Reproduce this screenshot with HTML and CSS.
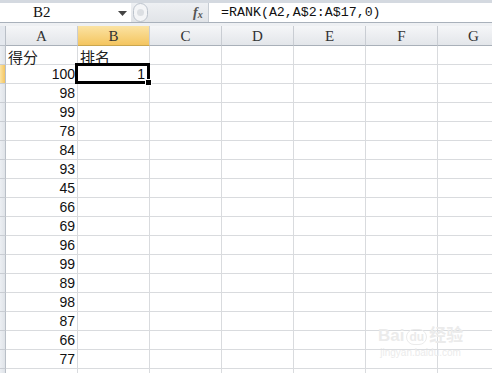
FILE: index.html
```html
<!DOCTYPE html>
<html>
<head>
<meta charset="utf-8">
<link rel="stylesheet" href="styles.css">
</head>
<body>
<div class="app">
  <div class="fbar">
    <div class="namebox">
      <span class="ref">B2</span>
      <svg class="drop" width="9" height="5" viewBox="0 0 9 5"><path d="M0 0H9L4.5 5Z" fill="#444"/></svg>
    </div>
    <div class="mid">
      <span class="knob"><span class="knob-in"></span></span>
      <span class="fx">f<sub>x</sub></span>
    </div>
    <div class="formula">=RANK(A2,A$2:A$17,0)</div>
  </div>
  <div class="gap"></div>
  <div class="sheet">
    <div class="corner"></div>
    <div class="ch">A</div>
    <div class="ch sel">B</div>
    <div class="ch">C</div>
    <div class="ch">D</div>
    <div class="ch">E</div>
    <div class="ch">F</div>
    <div class="ch">G</div>

    <div class="rh"></div><div class="c txt">得分</div><div class="c txt">排名</div><div class="c"></div><div class="c"></div><div class="c"></div><div class="c"></div><div class="c"></div>
    <div class="rh sel"></div><div class="c num">100</div><div class="c num active">1<span class="handle"></span></div><div class="c"></div><div class="c"></div><div class="c"></div><div class="c"></div><div class="c"></div>
    <div class="rh"></div><div class="c num">98</div><div class="c"></div><div class="c"></div><div class="c"></div><div class="c"></div><div class="c"></div><div class="c"></div>
    <div class="rh"></div><div class="c num">99</div><div class="c"></div><div class="c"></div><div class="c"></div><div class="c"></div><div class="c"></div><div class="c"></div>
    <div class="rh"></div><div class="c num">78</div><div class="c"></div><div class="c"></div><div class="c"></div><div class="c"></div><div class="c"></div><div class="c"></div>
    <div class="rh"></div><div class="c num">84</div><div class="c"></div><div class="c"></div><div class="c"></div><div class="c"></div><div class="c"></div><div class="c"></div>
    <div class="rh"></div><div class="c num">93</div><div class="c"></div><div class="c"></div><div class="c"></div><div class="c"></div><div class="c"></div><div class="c"></div>
    <div class="rh"></div><div class="c num">45</div><div class="c"></div><div class="c"></div><div class="c"></div><div class="c"></div><div class="c"></div><div class="c"></div>
    <div class="rh"></div><div class="c num">66</div><div class="c"></div><div class="c"></div><div class="c"></div><div class="c"></div><div class="c"></div><div class="c"></div>
    <div class="rh"></div><div class="c num">69</div><div class="c"></div><div class="c"></div><div class="c"></div><div class="c"></div><div class="c"></div><div class="c"></div>
    <div class="rh"></div><div class="c num">96</div><div class="c"></div><div class="c"></div><div class="c"></div><div class="c"></div><div class="c"></div><div class="c"></div>
    <div class="rh"></div><div class="c num">99</div><div class="c"></div><div class="c"></div><div class="c"></div><div class="c"></div><div class="c"></div><div class="c"></div>
    <div class="rh"></div><div class="c num">89</div><div class="c"></div><div class="c"></div><div class="c"></div><div class="c"></div><div class="c"></div><div class="c"></div>
    <div class="rh"></div><div class="c num">98</div><div class="c"></div><div class="c"></div><div class="c"></div><div class="c"></div><div class="c"></div><div class="c"></div>
    <div class="rh"></div><div class="c num">87</div><div class="c"></div><div class="c"></div><div class="c"></div><div class="c"></div><div class="c"></div><div class="c"></div>
    <div class="rh"></div><div class="c num">66</div><div class="c"></div><div class="c"></div><div class="c"></div><div class="c"></div><div class="c"></div><div class="c"></div>
    <div class="rh"></div><div class="c num">77</div><div class="c"></div><div class="c"></div><div class="c"></div><div class="c"></div><div class="c"></div><div class="c"></div>
    <div class="rh"></div><div class="c"></div><div class="c"></div><div class="c"></div><div class="c"></div><div class="c"></div><div class="c"></div><div class="c"></div>
  </div>
  <div class="wm">
    <div class="wm1">Bai<span class="du">du</span>经验</div>
    <div class="wm2">jingyan.baidu.com</div>
  </div>
</div>
</body>
</html>
```

FILE: styles.css
```css
html, body {
  margin: 0;
  padding: 0;
  background: #ffffff;
}
.app {
  position: relative;
  width: 492px;
  height: 373px;
  overflow: hidden;
  font-family: "Liberation Sans", "Noto Sans CJK SC", sans-serif;
}
.fbar {
  display: flex;
  height: 23px;
  box-sizing: border-box;
  border-top: 3px solid #d4d9e0;
  border-bottom: 1px solid #a9b1bb;
  background: #e6e9ed;
}
.namebox {
  width: 131px;
  background: #fff;
  display: flex;
  align-items: center;
  box-sizing: border-box;
  position: relative;
}
.ref {
  font-family: "Liberation Serif", serif;
  font-size: 15px;
  margin-left: 33px;
  color: #111;
}
.drop {
  position: absolute;
  left: 118px;
  top: 8px;
}
.mid {
  width: 78px;
  display: flex;
  align-items: center;
  background: linear-gradient(#eef0f3, #e1e4e8);
  border-right: 1px solid #c6ccd3;
  box-sizing: border-box;
}
.knob {
  width: 13px;
  height: 17px;
  margin-left: 2px;
  border-radius: 9px;
  border: 1px solid #bcc3cc;
  background: #f4f5f7;
  display: flex;
  align-items: center;
  justify-content: center;
}
.knob-in {
  width: 7px;
  height: 7px;
  border-radius: 50%;
  background: #dcdfe3;
}
.fx {
  margin-left: 45px;
  font-family: "Liberation Serif", serif;
  font-style: italic;
  font-weight: bold;
  font-size: 14px;
  color: #555;
  line-height: 1;
}
.fx sub {
  font-size: 10px;
  vertical-align: -1px;
}
.formula {
  flex: 1;
  background: #fff;
  font-family: "Liberation Mono", monospace;
  font-size: 13.3px;
  padding-left: 12px;
  display: flex;
  align-items: center;
  color: #111;
}
.gap {
  height: 3px;
  background: #eef0f3;
}
.sheet {
  display: grid;
  grid-template-columns: 6px repeat(7, 72px);
  grid-template-rows: 20px;
  grid-auto-rows: 19px;
}
.corner {
  background: #e4e8ee;
  border-right: 1px solid #b9bfc7;
  border-bottom: 1px solid #b9bfc7;
}
.ch {
  box-sizing: border-box;
  background: linear-gradient(#f5f6f8, #e3e6ea);
  border-right: 1px solid #c9cdd3;
  border-bottom: 1px solid #a9b0b9;
  font-family: "Liberation Serif", serif;
  font-size: 15px;
  color: #333;
  text-align: center;
  line-height: 20px;
}
.ch.sel {
  background: linear-gradient(#fbe3a3, #f4c560);
  border-bottom-color: #c9a64f;
}
.rh {
  box-sizing: border-box;
  background: linear-gradient(90deg, #eceff3, #dfe3e8);
  border-right: 1px solid #b9bfc7;
  border-bottom: 1px solid #c9cdd3;
}
.rh.sel {
  background: linear-gradient(90deg, #fbe3a3, #f4c560);
}
.c {
  box-sizing: border-box;
  border-right: 1px solid #d9dbde;
  border-bottom: 1px solid #d9dbde;
  font-size: 15px;
  line-height: 19px;
  color: #111;
  white-space: nowrap;
}
.txt {
  font-family: "Noto Sans CJK SC", sans-serif;
  font-size: 15px;
  padding-left: 2px;
  line-height: 22px;
  color: #222;
}
.num {
  text-align: right;
  padding-right: 2px;
  font-family: "Liberation Sans", sans-serif;
  font-size: 14px;
}
.active {
  position: relative;
  z-index: 2;
  padding-right: 4px;
}
.active::after {
  content: "";
  position: absolute;
  left: -3px;
  right: -1px;
  top: -2px;
  bottom: -1px;
  border: 3px solid #000;
}
.handle {
  position: absolute;
  right: -3px;
  bottom: -3px;
  width: 5px;
  height: 5px;
  background: #000;
  border: 1px solid #fff;
  z-index: 3;
}
.wm {
  position: absolute;
  left: 378px;
  top: 327px;
  color: #ebebeb;
  text-align: center;
  pointer-events: none;
}
.wm1 {
  font-family: "Liberation Sans", "Noto Sans CJK SC", sans-serif;
  font-size: 17px;
  font-weight: bold;
  line-height: 18px;
}
.du {
  display: inline-block;
  border: 1px solid #ebebeb;
  border-radius: 8px;
  font-size: 12px;
  padding: 0 2px;
  margin: 0 2px;
  line-height: 14px;
}
.wm2 {
  font-size: 10px;
  margin-top: 2px;
}
```
